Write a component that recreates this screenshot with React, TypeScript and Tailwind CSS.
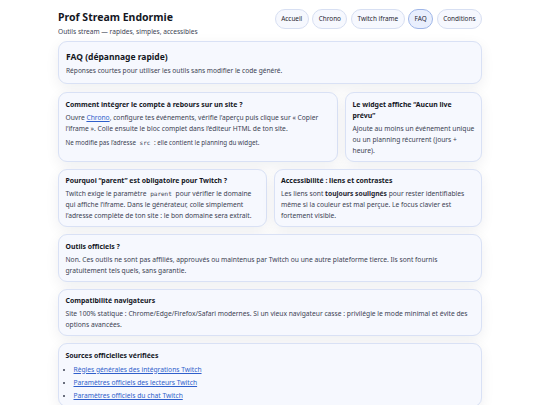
import { type ReactNode } from "react";

const card = "rounded-[9px] border border-[#d9e1f5] bg-[#f6f8fe] shadow-[0_4px_14px_rgba(20,30,60,0.07)]";

function Card({ title, children, className = "" }: { title: ReactNode; children: ReactNode; className?: string }) {
	return (
		<div className={`${card} pt-[5.5px] pr-[5px] pb-[5px] pl-[6.5px] ${className}`}>
			<h3 className="text-[6.9px] font-bold leading-[11px] text-[#14171f]">{title}</h3>
			<div className="mt-[2px] text-[6.7px] leading-[11px] text-[#3b4252]">{children}</div>
		</div>
	);
}

function A({ children }: { children: ReactNode }) {
	return <a href="#" className="text-[#2f5fcb] underline underline-offset-[1px]">{children}</a>;
}

const mono = "px-[2px] font-['DejaVu_Sans_Mono',monospace] text-[6px] leading-none";

export default function App() {
	const nav = ["Accueil", "Chrono", "Twitch iframe", "FAQ", "Conditions"];

	return (
		<div className="min-h-[405px] bg-white font-['Noto_Sans',sans-serif]">
			<div className="mx-auto w-[424px] pt-[9px]">
				<header className="flex items-start justify-between">
					<div className="pt-[1px]">
						<h1 className="text-[10.5px] font-bold leading-[14px] text-[#14171f]">Prof Stream Endormie</h1>
						<p className="mt-[3px] text-[6.6px] leading-[10px] text-[#3b4252]">Outils stream — rapides, simples, accessibles</p>
					</div>
					<nav className="flex gap-[3.5px]">
						{nav.map((n) => (
							<a
								key={n}
								href="#"
								className={`flex h-[20px] items-center rounded-full border px-[5.5px] text-[6.4px] text-[#1f2430] ${
									n === "FAQ" ? "border-[#9fb6e8] bg-[#e9effd]" : "border-[#d7dff2] bg-[#f6f8fe]"
								}`}
							>
								{n}
							</a>
						))}
					</nav>
				</header>

				<div className={`${card} mt-[4px] px-[7px] pt-[8px] pb-[7px]`}>
					<h2 className="text-[8.5px] font-bold leading-[13px] text-[#14171f]">FAQ (dépannage rapide)</h2>
					<p className="mt-[2px] text-[6.6px] leading-[11px] text-[#3b4252]">Réponses courtes pour utiliser les outils sans modifier le code généré.</p>
				</div>

				<div className="mt-[8px] grid grid-cols-[280px_1fr] gap-[7px]">
					<Card title="Comment intégrer le compte à rebours sur un site ?">
						<p>
							Ouvre <A>Chrono</A>, configure tes événements, vérifie l’aperçu puis clique sur « Copier l’iframe ». Colle ensuite le bloc complet dans l’éditeur HTML de ton site.
						</p>
						<p className="mt-[3px] text-[6.2px] leading-[11px]">
							Ne modifie pas l’adresse <code className={mono}>src</code> : elle contient le planning du widget.
						</p>
					</Card>
					<Card title="Le widget affiche “Aucun live prévu”">
						<p>Ajoute au moins un événement unique ou un planning récurrent (jours + heure).</p>
					</Card>
				</div>

				<div className="mt-[7px] grid grid-cols-2 gap-[7px]">
					<Card title="Pourquoi “parent” est obligatoire pour Twitch ?">
						<p>
							Twitch exige le paramètre <code className={mono}>parent</code> pour vérifier le domaine qui affiche l’iframe. Dans le générateur, colle simplement l’adresse complète de ton site : le bon domaine sera extrait.
						</p>
					</Card>
					<Card title="Accessibilité : liens et contrastes">
						<p>
							Les liens sont <strong className="font-bold text-[#1f2430]">toujours soulignés</strong> pour rester identifiables même si la couleur est mal perçue. Le focus clavier est fortement visible.
						</p>
					</Card>
				</div>

				<div className="mt-[7px] flex flex-col gap-[7px] pb-[10px]">
					<Card title="Outils officiels ?">
						<p>Non. Ces outils ne sont pas affiliés, approuvés ou maintenus par Twitch ou une autre plateforme tierce. Ils sont fournis gratuitement tels quels, sans garantie.</p>
					</Card>
					<Card title="Compatibilité navigateurs">
						<p>Site 100% statique : Chrome/Edge/Firefox/Safari modernes. Si un vieux navigateur casse : privilégie le mode minimal et évite des options avancées.</p>
					</Card>
					<Card title="Sources officielles vérifiées">
						<ul className="mt-[3px] list-disc space-y-[2px] pl-[8px] marker:text-[#3b4252]">
							<li><A>Règles générales des intégrations Twitch</A></li>
							<li><A>Paramètres officiels des lecteurs Twitch</A></li>
							<li><A>Paramètres officiels du chat Twitch</A></li>
						</ul>
					</Card>
				</div>
			</div>
		</div>
	);
}
